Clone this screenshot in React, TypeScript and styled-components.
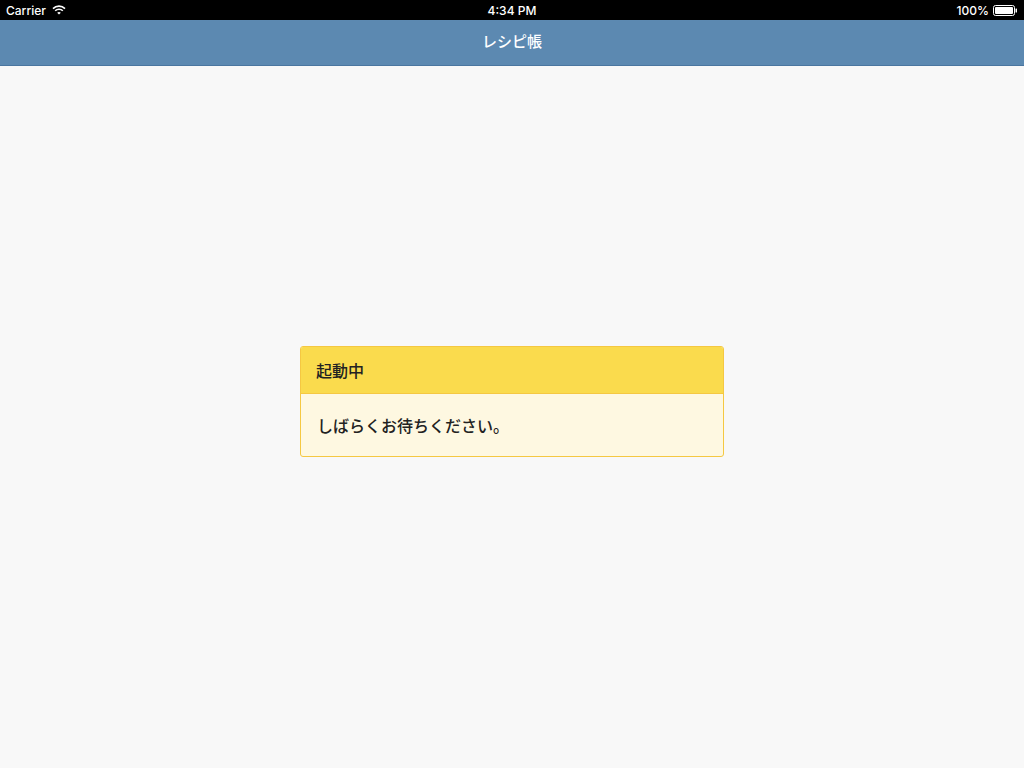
import React from "react";
import styled, { createGlobalStyle } from "styled-components";

const GlobalStyle = createGlobalStyle`
  html, body {
    margin: 0;
    padding: 0;
    background: #f8f8f8;
  }
  body {
    font-family: "Noto Sans", "Noto Sans CJK JP", sans-serif;
  }
`;

const Screen = styled.div`
  display: flex;
  flex-direction: column;
  width: 1024px;
  height: 768px;
  background: #f8f8f8;
`;

const StatusBar = styled.div`
  height: 20px;
  background: #000;
  color: #fff;
  display: grid;
  grid-template-columns: 1fr auto 1fr;
  align-items: center;
  padding: 0 6px;
  font-family: "Inter", "Noto Sans", sans-serif;
  font-size: 12px;
  font-weight: 500;
`;

const StatusLeft = styled.div`
  display: flex;
  align-items: center;
  gap: 6px;
`;

const StatusRight = styled.div`
  display: flex;
  align-items: center;
  justify-content: flex-end;
  gap: 4px;
`;

const NavBar = styled.div`
  height: 41px;
  padding-bottom: 4px;
  background: #5c89b1;
  border-bottom: 1px solid #4a76a0;
  display: flex;
  align-items: center;
  justify-content: center;
  color: #fff;
  font-size: 15px;
  font-weight: 500;
`;

const Content = styled.div`
  flex: 1;
  display: flex;
  align-items: center;
  justify-content: center;
  padding-bottom: 32px;
`;

const Panel = styled.div`
  width: 424px;
  box-sizing: border-box;
  border: 1px solid #f5c842;
  border-radius: 3px;
  overflow: hidden;
  background: #fef8e1;
`;

const PanelHeader = styled.div`
  height: 47px;
  box-sizing: border-box;
  padding: 0 15px;
  display: flex;
  align-items: center;
  background: #fadb4d;
  border-bottom: 1px solid #f5c842;
  color: #222;
  font-size: 16px;
  font-weight: 500;
`;

const PanelBody = styled.div`
  height: 62px;
  box-sizing: border-box;
  padding: 0 16px;
  display: flex;
  align-items: center;
  color: #222;
  font-size: 16px;
  font-weight: 500;
`;

const Wifi = () => (
  <svg width="14" height="10" viewBox="0 0 14 10">
    <path d="M1 3.6a8.5 8.5 0 0 1 12 0" stroke="#fff" strokeWidth="1.6" fill="none" />
    <path d="M3.2 5.8a5.4 5.4 0 0 1 7.6 0" stroke="#fff" strokeWidth="1.6" fill="none" />
    <path d="M7 9.6 5.2 7.8a2.6 2.6 0 0 1 3.6 0z" fill="#fff" />
  </svg>
);

const Battery = () => (
  <svg width="25" height="11" viewBox="0 0 25 11">
    <rect x="0.5" y="0.5" width="21" height="10" rx="2" stroke="#fff" fill="none" />
    <rect x="2" y="2" width="18" height="7" rx="1" fill="#fff" />
    <rect x="22.5" y="3.5" width="1.5" height="4" rx="0.5" fill="#fff" />
  </svg>
);

export default function App() {
  return (
    <>
      <GlobalStyle />
      <Screen>
        <StatusBar>
          <StatusLeft>
            <span>Carrier</span>
            <Wifi />
          </StatusLeft>
          <span>4:34 PM</span>
          <StatusRight>
            <span>100%</span>
            <Battery />
          </StatusRight>
        </StatusBar>
        <NavBar>レシピ帳</NavBar>
        <Content>
          <Panel>
            <PanelHeader>起動中</PanelHeader>
            <PanelBody>しばらくお待ちください。</PanelBody>
          </Panel>
        </Content>
      </Screen>
    </>
  );
}
